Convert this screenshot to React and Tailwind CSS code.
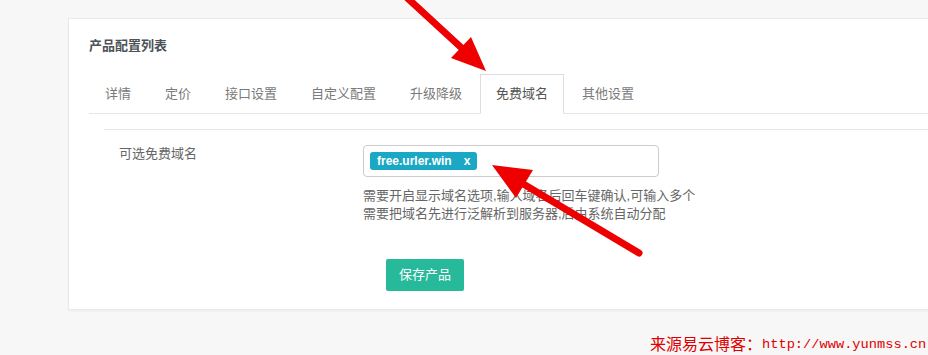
import React from "react";

const tabs = ["详情", "定价", "接口设置", "自定义配置", "升级降级", "免费域名", "其他设置"];

const Arrows = () => (
  <svg
    className="absolute top-0 left-0 pointer-events-none"
    width="928"
    height="355"
    viewBox="0 0 928 355"
  >
    <line x1="403" y1="-6" x2="466" y2="52" stroke="#ee0000" strokeWidth="7" strokeLinecap="round" />
    <polygon points="486,71 451,58 471,37" fill="#ee0000" />
    <line x1="639" y1="253" x2="520" y2="182" stroke="#ee0000" strokeWidth="7" strokeLinecap="round" />
    <polygon points="492,165 533,170 516,198" fill="#ee0000" />
  </svg>
);

export default function App() {
  return (
    <div
      className="relative h-[355px] overflow-hidden bg-[#f7f7f7]"
      style={{ fontFamily: '"Liberation Sans", "Noto Sans CJK SC", sans-serif' }}
    >
      <div className="pt-[18px] pl-[68px]">
        <div className="w-[900px] h-[292px] bg-white border border-[#e6e9ed] shadow-[0_1px_2px_rgba(0,0,0,0.05)]">
          <div className="pl-[20px] pt-[18px]">
            <h2 className="text-[13px] leading-[18px] font-bold text-[#4d5258]">产品配置列表</h2>
          </div>

          <div className="ml-[20px] mt-[19px]">
            <ul className="flex border-b border-[#e6e6e6]">
              {tabs.map((t) => (
                <li
                  key={t}
                  className={
                    t === "免费域名"
                      ? "-mb-px mr-[2px] border border-[#dddddd] border-b-white bg-white px-[15px] pt-[10px] pb-[10px] text-[13px] leading-[18px] text-[#555]"
                      : "-mb-px mr-[2px] border border-transparent px-[15px] pt-[10px] pb-[10px] text-[13px] leading-[18px] text-[#7a7a7a]"
                  }
                >
                  {t}
                </li>
              ))}
            </ul>

            <div className="pl-[15px] pt-[15px]">
              <div className="border-t border-[#e6e6e6]"></div>
              <div className="flex pt-[15px]">
                <label className="w-[259px] pl-[15px] text-[13px] leading-[18px] text-[#666]">可选免费域名</label>
                <div>
                  <div className="flex items-center w-[296px] h-[32px] border border-[#cccccc] rounded-[4px] pl-[6px]">
                    <span className="flex items-center h-[18px] bg-[#1aa8c4] rounded-[3px] px-[7px] text-[12px] font-bold text-white">
                      free.urler.win<span className="ml-[12px]">x</span>
                    </span>
                  </div>
                  <p className="mt-[10px] text-[13px] leading-[18px] text-[#666]">
                    需要开启显示域名选项,输入域名后回车键确认,可输入多个
                    <br />
                    需要把域名先进行泛解析到服务器,后由系统自动分配
                  </p>
                  <button className="mt-[36px] ml-[23px] w-[78px] h-[32px] bg-[#26b99a] text-white text-[13px] rounded-[2px]">
                    保存产品
                  </button>
                </div>
              </div>
            </div>
          </div>
        </div>
      </div>

      <div
        className="absolute left-[650px] top-[335px] flex items-center text-[16px] leading-[20px] text-[#e00000] whitespace-nowrap"
        style={{ fontFamily: '"Liberation Serif", "Noto Sans CJK SC", serif' }}
      >
        来源易云博客：<span className="text-[13.7px]" style={{ fontFamily: '"Liberation Mono", monospace' }}>http://www.yunmss.cn</span>
      </div>

      <Arrows />
    </div>
  );
}
